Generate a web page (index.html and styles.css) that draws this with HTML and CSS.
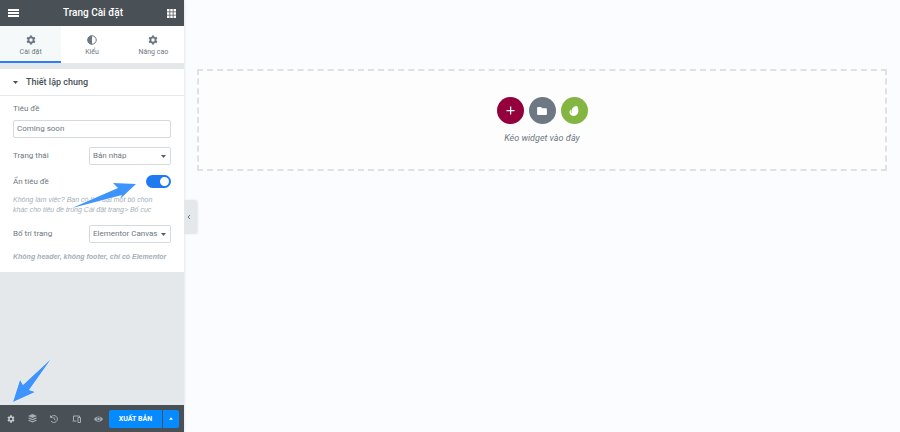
FILE: index.html
```html
<!DOCTYPE html>
<html lang="vi">
<head>
  <meta charset="utf-8">
  <title>Trang Cài đặt</title>
  <link rel="stylesheet" href="styles.css">
</head>
<body>
  <svg class="defs" aria-hidden="true">
    <symbol id="gear" viewBox="0 0 24 24">
      <path fill-rule="evenodd" d="M9.5 1h5l.6 3.2 1.9 1.1 3.1-1.1 2.5 4.3-2.5 2.2v2.6l2.5 2.2-2.5 4.3-3.1-1.1-1.9 1.1-.6 3.2h-5l-.6-3.2L7 18.700l-3.100 1.100-2.500-4.300 2.500-2.200v-2.600L1.400 8.500l2.500-4.300L7 5.300l1.900-1.100zM12 8a4 4 0 1 0 0 8 4 4 0 0 0 0-8z"/>
    </symbol>
  </svg>

  <aside class="panel">
    <header class="panel-header">
      <button class="icon-btn" aria-label="Menu">
        <svg width="11" height="8" viewBox="0 0 11 8"><path d="M0 0h11v2H0zM0 3h11v2H0zM0 6h11v2H0z"/></svg>
      </button>
      <h1>Trang Cài đặt</h1>
      <button class="icon-btn" aria-label="Widgets">
        <svg width="9" height="9" viewBox="0 0 18 18"><path d="M0 0h5v5H0zM6.500 0h5v5h-5zM13 0h5v5h-5zM0 6.500h5v5H0zM6.500 6.500h5v5h-5zM13 6.500h5v5h-5zM0 13h5v5H0zM6.500 13h5v5h-5zM13 13h5v5h-5z"/></svg>
      </button>
    </header>

    <nav class="tabs">
      <button class="tab active"><svg width="10" height="10"><use href="#gear"/></svg>Cài đặt</button>
      <button class="tab">
        <svg width="10" height="10" viewBox="0 0 20 20"><circle class="ring" cx="10" cy="10" r="8.500"/><path d="M10 1a9 9 0 0 0 0 18z"/></svg>Kiểu
      </button>
      <button class="tab"><svg width="10" height="10"><use href="#gear"/></svg>Nâng cao</button>
    </nav>

    <section class="section">
      <h2>
        <svg width="5" height="3" viewBox="0 0 10 6"><path d="M0 0h10L5 6z"/></svg>
        Thiết lập chung
      </h2>
      <form class="controls">
        <label for="title">Tiêu đề</label>
        <input class="text" id="title" type="text" value="Coming soon">

        <div class="row status">
          <label for="status">Trạng thái</label>
          <select id="status"><option>Bản nháp</option></select>
        </div>

        <div class="row">
          <label for="hide">Ẩn tiêu đề</label>
          <input class="switch" id="hide" type="checkbox" checked>
        </div>
        <p class="hint">Không làm việc? Bạn có thể đặt một bộ chọn khác cho tiêu đề trong Cài đặt trang&gt; Bố cục</p>

        <div class="row layout">
          <label for="layout">Bố trí trang</label>
          <select id="layout"><option>Elementor Canvas</option></select>
        </div>
        <p class="hint strong">Không header, không footer, chỉ có Elementor</p>
      </form>
      <svg class="arrow arrow-switch" width="68" height="30" viewBox="0 0 68 30"><path d="M66 2 43 1l5 5L2 26l50-13-2 4z"/></svg>
    </section>

    <footer class="panel-footer">
      <button class="tool on" aria-label="Cài đặt"><svg width="8" height="8"><use href="#gear"/></svg></button>
      <button class="tool" aria-label="Navigator">
        <svg width="9" height="9" viewBox="0 0 18 18"><path d="m9 0 9 4-9 4-9-4zM2.500 7 9 9.800 15.500 7 18 8.500l-9 4-9-4zM2.500 11.500 9 14.300l6.500-2.800L18 13l-9 4-9-4z"/></svg>
      </button>
      <button class="tool" aria-label="Lịch sử">
        <svg class="line" width="8" height="8" viewBox="0 0 16 16"><path d="M2 4a7 7 0 1 1 0 8M1 1v4h4M8 4v4l3 2"/></svg>
      </button>
      <button class="tool" aria-label="Responsive">
        <svg class="line" width="9" height="8" viewBox="0 0 18 16"><path d="M3 11V2h9M1 12h8M12 5h5v10h-5zM12 2h3v3"/></svg>
      </button>
      <button class="tool" aria-label="Xem trước">
        <svg width="9" height="8" viewBox="0 0 18 14"><path fill-rule="evenodd" d="M0 7c4-7 14-7 18 0-4 7-14 7-18 0zm9-4a4 4 0 1 0 0 8 4 4 0 0 0 0-8z"/><circle cx="9" cy="7" r="2.500"/></svg>
      </button>
      <div class="publish">
        <button class="save">XUẤT BẢN</button>
        <button class="more" aria-label="Tùy chọn"><svg width="4" height="3" viewBox="0 0 8 5"><path d="M0 5h8L4 0z"/></svg></button>
      </div>
      <svg class="arrow arrow-gear" width="42" height="50" viewBox="0 0 42 50"><path d="M40 4 12 30l-3-5-7 22 22-10-6-2z"/></svg>
    </footer>

    <button class="collapse" aria-label="Thu gọn">
      <svg class="line" width="4" height="6" viewBox="0 0 8 12"><path d="M6 2 2 6l4 4"/></svg>
    </button>
  </aside>

  <main class="canvas">
    <div class="drop-area">
      <div class="actions">
        <button class="round add" aria-label="Thêm section">
          <svg width="9" height="9" viewBox="0 0 18 18"><path d="M8 1h2.500v7H17v2.500h-6.500V17H8v-6.500H1V8h7z"/></svg>
        </button>
        <button class="round folder" aria-label="Thêm mẫu">
          <svg width="10" height="8" viewBox="0 0 22 18"><path d="M2 0h7l2.500 3H20a2 2 0 0 1 2 2v11a2 2 0 0 1-2 2H2a2 2 0 0 1-2-2V2a2 2 0 0 1 2-2z"/></svg>
        </button>
        <button class="round envato" aria-label="Envato">
          <svg width="10" height="10" viewBox="0 0 20 20"><path d="M16 0C10 0 5 4 5 12l1 3c-2-2-3-4-2-8-3 2-4 6-2 9 3 5 11 5 15 0 3-5 2-12-1-16z"/></svg>
        </button>
      </div>
      <p>Kéo widget vào đây</p>
    </div>
  </main>
</body>
</html>
```

FILE: styles.css
```css
* { box-sizing: border-box; }
body {
  margin: 0;
  display: flex;
  min-height: 100vh;
  background: #fafcff;
  color: #6d7882;
  font: 8px/10px Roboto, "Liberation Sans", sans-serif;
}
h1, h2, p { margin: 0; }
button, input, select { font: inherit; color: inherit; }
button { border: 0; padding: 0; background: none; cursor: pointer; }
svg { fill: currentColor; display: block; }
.defs { position: absolute; width: 0; height: 0; }
.line { fill: none; stroke: currentColor; stroke-width: 2; }

/* panel */
.panel {
  position: relative;
  flex: 0 0 184px;
  display: flex;
  flex-direction: column;
  background: #e4e8eb;
  box-shadow: 0 0 3px #d5dadf;
}
.panel-header {
  display: flex;
  align-items: center;
  justify-content: space-between;
  height: 26px;
  padding: 0 8px;
  background: #495157;
  color: #fff;
}
.panel-header h1 { font-size: 10px; font-weight: 500; }
.tabs { display: flex; height: 37px; background: #fff; }
.tab {
  flex: 1;
  display: flex;
  flex-direction: column;
  align-items: center;
  padding-top: 9px;
  gap: 2px;
  border-bottom: 2px solid transparent;
  font-size: 7px;
}
.tab.active { background: #f6f9fa; border-color: #2e7cf6; }
.tab .ring { fill: none; stroke: currentColor; stroke-width: 2; }

.section { position: relative; margin-top: 6px; background: #fff; }
.section h2 {
  display: flex;
  align-items: center;
  gap: 8px;
  height: 27px;
  padding: 0 13px;
  border-bottom: 1px solid #e6e9ec;
  color: #495157;
  font-size: 9px;
  font-weight: 500;
}
.controls { padding: 8px 13px 10px; }
.controls label { display: block; }
.text, select {
  height: 18px;
  border: 1px solid #d5dadf;
  border-radius: 2px;
  background: #fff;
}
.text { display: block; width: 100%; margin-top: 6px; padding: 0 3px 1px; }
select {
  appearance: none;
  width: 82px;
  padding: 0 3px;
  background: #fff url("data:image/svg+xml,%3Csvg xmlns='http://www.w3.org/2000/svg' viewBox='0 0 10 6'%3E%3Cpath fill='%23556068' d='M0 0h10L5 6z'/%3E%3C/svg%3E") no-repeat right 4px center / 5px 3px;
}
.row { display: flex; align-items: center; justify-content: space-between; }
.status { margin: 9px 0 10px; }
.layout { margin: 10px 0 9px; }
.switch {
  appearance: none;
  display: flex;
  width: 25px;
  height: 13px;
  margin: 0;
  padding: 2px;
  border-radius: 7px;
  background: #c2cbd2;
}
.switch::before { content: ""; width: 9px; height: 9px; border-radius: 50%; background: #fff; }
.switch:checked { justify-content: flex-end; background: #1f7af0; }
.hint {
  margin-top: 7px;
  padding-right: 6px;
  color: #a4afb7;
  font-family: "Liberation Sans", Arial, sans-serif;
  font-size: 7px;
  font-style: italic;
}
.hint.strong { padding-right: 0; font-weight: 700; }

.arrow {
  position: absolute;
  fill: #3d94ff;
  stroke: #fff;
  stroke-width: 1;
  paint-order: stroke;
  pointer-events: none;
}
.arrow-switch { left: 70px; top: 113px; }
.arrow-gear { left: 11px; bottom: 27px; }

.panel-footer {
  position: relative;
  display: flex;
  align-items: center;
  height: 27px;
  margin-top: auto;
  padding-right: 5px;
  background: #495157;
  color: #a4afb7;
}
.tool { flex: 1; display: flex; justify-content: center; }
.tool.on { color: #c2cbd2; }
.publish { display: flex; gap: 1px; height: 18px; color: #fff; }
.save, .more { background: #058bff; }
.save { width: 53px; border-radius: 2px 0 0 2px; font-size: 7px; font-weight: 700; }
.more { width: 16px; border-radius: 0 2px 2px 0; }
.more svg { margin: auto; }

.collapse {
  position: absolute;
  left: 100%;
  top: 200px;
  width: 13px;
  height: 34px;
  padding-left: 3px;
  border-radius: 0 3px 3px 0;
  background: #e4e8eb;
  box-shadow: 1px 0 2px #e4e8eb;
}

/* canvas */
.canvas { flex: 1; padding: 69px 13px 0; }
.drop-area {
  display: flex;
  flex-direction: column;
  align-items: center;
  gap: 8px;
  padding: 26px 0 25px;
  border: 2px dashed #dfe2e5;
  background: #fdfdfd;
}
.drop-area p { font-size: 9px; font-style: italic; line-height: 12px; }
.actions { display: flex; gap: 5px; }
.round { width: 27px; height: 27px; border-radius: 50%; color: #fff; }
.round svg { margin: auto; }
.add { background: #93003c; }
.folder { background: #6d7882; }
.envato { background: #82b541; }
```
